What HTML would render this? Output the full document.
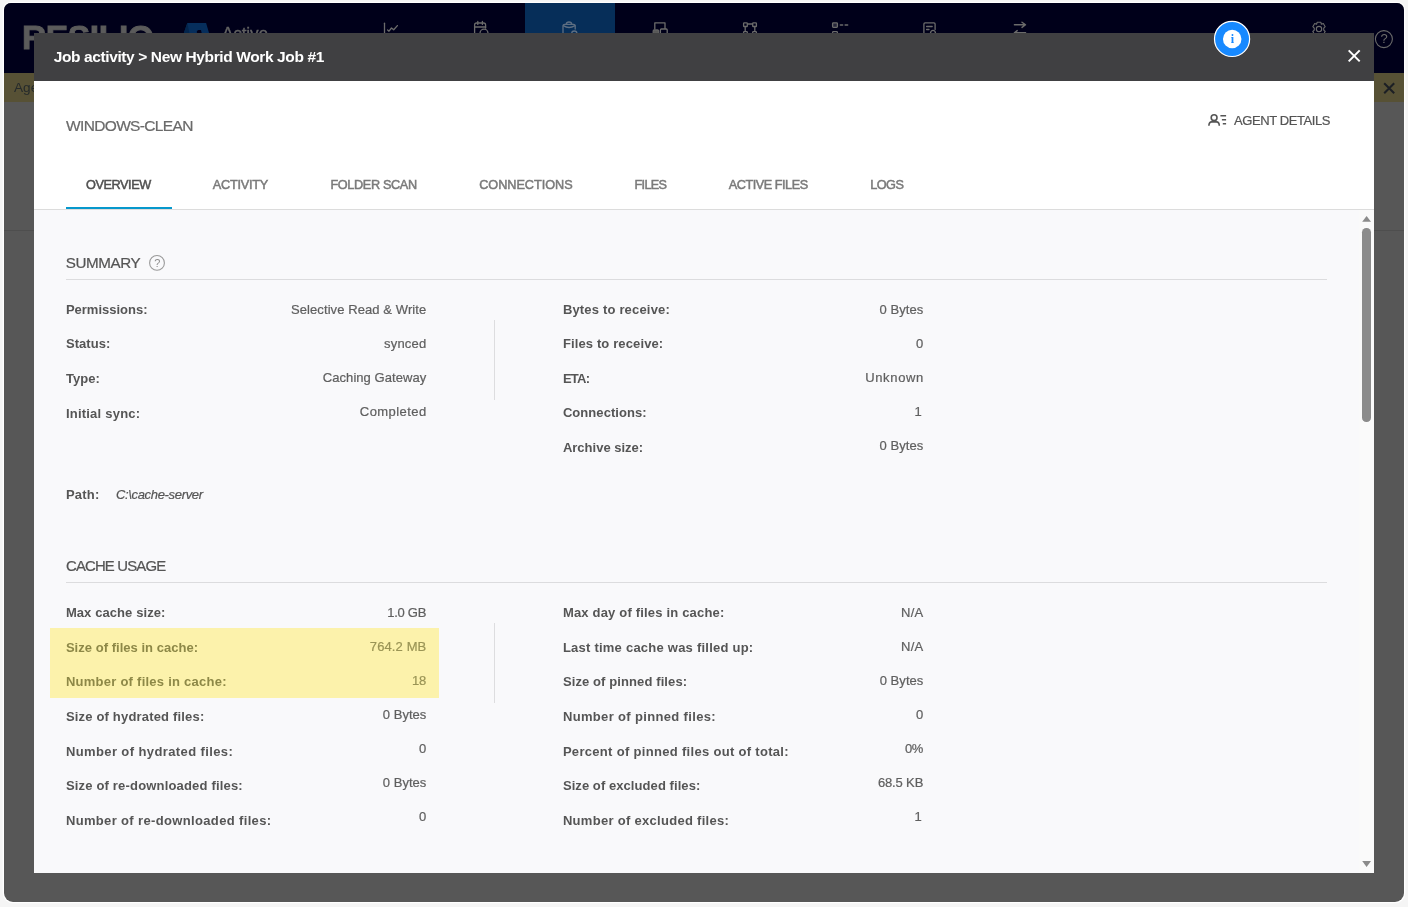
<!DOCTYPE html>
<html lang="en">
<head>
<meta charset="utf-8">
<title>Job activity &gt; New Hybrid Work Job #1</title>
<style>
html,body{margin:0;padding:0}
body{width:1408px;height:907px;overflow:hidden;position:relative;background:#f5f5f5;font-family:"Liberation Sans",Arial,sans-serif;font-size:13px;color:#555;-webkit-font-smoothing:antialiased}
.t{position:absolute;white-space:pre;line-height:20px;z-index:5}
/* screenshot frame */
.frame{position:absolute;left:4px;top:3px;width:1400px;height:899px;border-radius:7px 7px 9px 9px;overflow:hidden;background:#575757;box-shadow:0 0 0 1.3px #fff}
/* dimmed application behind the modal (coordinates relative to frame) */
.nav{position:absolute;left:0;top:0;width:1400px;height:70px;background:#00001a}
.nav .on{position:absolute;left:521px;top:0;width:90px;height:70px;background:#062e59}
.banner{position:absolute;left:0;top:70px;width:1400px;height:29px;background:#575135}
.pageline{position:absolute;left:0;top:227px;width:1400px;height:1px;background:#4e4e4e}
.logo{position:absolute;left:18.4px;top:17.2px;font-size:33.6px;line-height:36px;font-weight:700;color:#5b5b5b;letter-spacing:-0.4px;white-space:pre;-webkit-text-stroke:0.9px #5b5b5b}
.active{position:absolute;left:218px;top:18px;font-size:17.3px;line-height:24px;color:#626262;white-space:pre;letter-spacing:-0.2px;-webkit-text-stroke:0.35px #626262}
.age{position:absolute;left:10px;top:5px;font-size:13.6px;line-height:20px;color:#252a2b;white-space:pre}
svg{position:absolute;overflow:visible}
/* modal */
.modal{position:absolute;left:34px;top:33px;width:1340px;height:840px;background:#f9f9fb;z-index:2}
.mhead{position:absolute;left:0;top:0;width:1340px;height:47.5px;background:#404042}
.mtop{position:absolute;left:0;top:47.5px;width:1340px;height:128.5px;background:#fff;border-bottom:1px solid #dcdcdc}
.tabline{position:absolute;left:32px;top:174px;width:106px;height:2px;background:#0698cc}
.hr{position:absolute;left:32px;width:1261px;height:1px;background:#dcdcde}
.vr{position:absolute;left:460px;width:1px;background:#dddddf}
.hl{position:absolute;left:15.5px;top:595.3px;width:389.7px;height:70px;background:#fcf2ab}
.sbtrack{position:absolute;left:1325px;top:177px;width:15px;height:663px;background:#fafafa}
.sbthumb{position:absolute;left:1328.3px;top:194.5px;width:8.6px;height:194.5px;border-radius:4.3px;background:#8b8b8b}
.info{left:0;top:0;z-index:6}
.txt{position:absolute;left:0;top:0;width:1408px;height:907px;z-index:5;will-change:transform}
.g{will-change:transform}
.navsvg{left:-4px;top:-3px}
.modsvg{left:-34px;top:-33px}
.helpq{position:absolute;left:1374.9px;top:26.3px;width:10px;text-align:center;font-size:13px;line-height:20px;color:#6b6b6b}

</style>
</head>
<body>
<div class="frame">
  <div class="nav">
    <div class="on"></div>
    <div class="logo g">RESILIO</div>
    <div class="active g">Active</div>
  </div>
  <div class="banner"><span class="age g">Agents</span></div>
  <div class="pageline"></div>
  <!-- dimmed navigation icons; svg user units = page pixels -->
  <svg class="navsvg" width="1408" height="110" viewBox="0 0 1408 110" fill="none" stroke="#6b6b6b" stroke-width="1.3" stroke-linecap="round" stroke-linejoin="round">
    <!-- product mark -->
    <path d="M187.3 23 L206.1 23 L209.6 35 L183.2 35 Z" fill="#062e5c" stroke="none"/>
    <path d="M187.3 23 L189.8 35 L183.2 35 Z" fill="#03244b" stroke="none"/>
    <path d="M196.9 35 V31 L198.4 30 H201 L202.1 35 Z" fill="#00001a" stroke="none"/>
    <!-- chart -->
    <path d="M384.5 23.2 V40"/>
    <path d="M387.6 30 L389 31.2 L391.5 28 L393.7 29.8 L397.4 25.6"/>
    <!-- calendar + clock -->
    <path d="M474.6 40 V25 Q474.6 23 476.6 23 H483.6 Q485.6 23 485.6 25 V28"/>
    <path d="M474.6 27 H485.6 M477.8 21.4 V24.4 M482.4 21.4 V24.4"/>
    <circle cx="484" cy="33.2" r="4"/>
    <!-- jobs (active) -->
    <g stroke="#5d6e82">
      <path d="M563 40 V26 Q563 24.3 564.7 24.3 H573.5 Q575.2 24.3 575.2 26 V29"/>
      <path d="M566.2 24.2 Q566.4 22 569 22 Q571.6 22 571.8 24.2"/>
      <path d="M563.3 25.6 Q569 29.4 575 25.6"/>
      <circle cx="574.3" cy="33.6" r="2.6"/>
    </g>
    <!-- agents / devices -->
    <path d="M654.8 29 V22.8 H665 V28.4"/>
    <path d="M653.2 33.5 V31 Q653.2 30 654.2 30 H657.6 Q658.6 30 658.6 31 V33.5 Z" fill="#585858" stroke="#626262"/>
    <path d="M660.4 36 V30 Q660.4 29 661.4 29 H666.2 Q667.2 29 667.2 30 V36"/>
    <!-- groups -->
    <rect x="743.6" y="22.8" width="3.7" height="3.7" rx=".6"/>
    <rect x="752.7" y="22.8" width="3.7" height="3.7" rx=".6"/>
    <path d="M747.5 24 H752.5 M745.2 26.8 V31.4 M754.8 26.8 V31.4"/>
    <rect x="743.6" y="31.7" width="3.7" height="3.7" rx=".6"/>
    <rect x="752.7" y="31.7" width="3.7" height="3.7" rx=".6"/>
    <!-- profiles / list -->
    <rect x="832.6" y="22.8" width="4.8" height="4.6" rx=".8" fill="#26263a"/>
    <path d="M840.4 25 H842.6 M845.2 25 H847.6" stroke-width="1.6"/>
    <rect x="832.6" y="31.6" width="4.8" height="4.6" rx=".8"/>
    <!-- scripts -->
    <path d="M923.9 40 V24 Q923.9 22.9 925 22.9 H934 Q935.1 22.9 935.1 24 V29.6"/>
    <path d="M926.6 26.5 H932.2 M926.6 29.5 H929"/>
    <path d="M930.4 33.4 Q930.8 30.4 933 30.4 Q935.2 30.4 935.6 33.4"/>
    <!-- transfers -->
    <path d="M1014.4 24.8 H1025.4 M1022 22.2 L1025.5 24.8 L1022 27.4" stroke-width="1.4"/>
    <path d="M1014.4 32.8 H1025.6 M1017.2 30.6 L1014.4 32.8" stroke-width="1.4"/>
    <!-- settings gear -->
    <path d="M1317.1 22.3 h3.8 l.5 2 l1.9 -.8 l1.9 3.2 l-1.5 1.4 q.2 1 0 2 l1.5 1.4 l-1.9 3.2 l-1.9 -.8 l-.5 2 h-3.8 l-.5 -2 l-1.9 .8 l-1.9 -3.2 l1.5 -1.4 q-.2 -1 0 -2 l-1.5 -1.4 l1.9 -3.2 l1.9 .8 Z" stroke-width="1.1"/>
    <circle cx="1319" cy="29.1" r="2.7" stroke-width="1.1"/>
    <!-- help -->
    <circle cx="1383.9" cy="39.1" r="8.5" stroke-width="1.1"/>
    <!-- banner close -->
    <path d="M1384.2 83.2 L1394.2 93.2 M1394.2 83.2 L1384.2 93.2" stroke="#1c1f24" stroke-width="2" stroke-linecap="butt"/>
  </svg>
  <span class="helpq g">?</span>
</div>
<div class="modal">
  <div class="mhead"></div>
  <div class="mtop"></div>
  <div class="tabline"></div>
  <div class="hr" style="top:246px"></div>
  <div class="hr" style="top:549px"></div>
  <div class="vr" style="top:287px;height:80px"></div>
  <div class="vr" style="top:590px;height:80px"></div>
  <div class="hl"></div>
  <div class="sbtrack"></div>
  <div class="sbthumb"></div>
  <!-- modal icons; svg user units = page pixels -->
  <svg class="modsvg" width="1408" height="907" viewBox="0 0 1408 907" fill="none" stroke-linecap="butt">
    <path d="M1348.7 50.4 L1359.7 61.4 M1359.7 50.4 L1348.7 61.4" stroke="#fff" stroke-width="2"/>
    <g stroke="#555" stroke-width="1.6">
      <circle cx="1214.1" cy="117.7" r="2.9"/>
      <path d="M1208.9 125.8 Q1208.9 121.9 1211.8 121.9 H1216.4 Q1219.3 121.9 1219.3 125.8"/>
      <path d="M1220.4 115.8 H1226.1 M1221.9 119.8 H1226.1 M1222.8 123.8 H1226.1"/>
    </g>
    <circle cx="157" cy="262.9" r="7.4" stroke="#9a9a9a" stroke-width="1.1"/>
    <path d="M1362.2 221.8 L1366.6 216 L1371 221.8 Z" fill="#8b8b8b"/>
    <path d="M1362.2 861 L1366.6 867 L1371 861 Z" fill="#8b8b8b"/>
  </svg>
</div>
<svg class="info" width="1408" height="70" viewBox="0 0 1408 70">
  <circle cx="1232.05" cy="38.95" r="17.55" fill="#1789ff" stroke="#fff" stroke-width="1.2"/>
  <circle cx="1232.2" cy="39.05" r="9.25" fill="#fff"/>
  <text x="1232.5" y="42.8" text-anchor="middle" font-family="'Liberation Serif','DejaVu Serif',serif" font-weight="700" font-size="12.2" fill="#1789ff">i</text>
</svg>
<div class="txt">
<span class="t" style="left:153.2px;top:253.4px;width:8px;text-align:center;font-size:11px;line-height:20px;color:#8e8e8e">?</span>
<span class="t" style="top:47.48px;font-size:15.5px;color:#ffffff;font-weight:700;letter-spacing:-0.384px;left:53.70px">Job activity &gt; New Hybrid Work Job #1</span>
<span class="t" style="top:116.08px;font-size:15.5px;color:#6a6a6a;-webkit-text-stroke:0.22px #6a6a6a;letter-spacing:-0.650px;left:66.00px">WINDOWS-CLEAN</span>
<span class="t" style="top:111.45px;font-size:13px;color:#555;-webkit-text-stroke:0.22px #555;letter-spacing:-0.399px;left:1233.90px">AGENT DETAILS</span>
<span class="t" style="top:175.25px;font-size:12.7px;color:#505050;-webkit-text-stroke:0.5px #505050;letter-spacing:-0.422px;left:86.00px">OVERVIEW</span>
<span class="t" style="top:175.25px;font-size:12.7px;color:#7a7a7a;-webkit-text-stroke:0.5px #7a7a7a;letter-spacing:-0.244px;left:212.80px">ACTIVITY</span>
<span class="t" style="top:175.25px;font-size:12.7px;color:#7a7a7a;-webkit-text-stroke:0.5px #7a7a7a;letter-spacing:-0.355px;left:330.40px">FOLDER SCAN</span>
<span class="t" style="top:175.25px;font-size:12.7px;color:#7a7a7a;-webkit-text-stroke:0.5px #7a7a7a;letter-spacing:-0.035px;left:479.20px">CONNECTIONS</span>
<span class="t" style="top:175.25px;font-size:12.7px;color:#7a7a7a;-webkit-text-stroke:0.5px #7a7a7a;letter-spacing:-0.641px;left:634.40px">FILES</span>
<span class="t" style="top:175.25px;font-size:12.7px;color:#7a7a7a;-webkit-text-stroke:0.5px #7a7a7a;letter-spacing:-0.483px;left:728.80px">ACTIVE FILES</span>
<span class="t" style="top:175.25px;font-size:12.7px;color:#7a7a7a;-webkit-text-stroke:0.5px #7a7a7a;letter-spacing:-0.522px;left:870.20px">LOGS</span>
<span class="t" style="top:253.18px;font-size:15.2px;color:#555;-webkit-text-stroke:0.22px #555;letter-spacing:-0.410px;left:65.70px">SUMMARY</span>
<span class="t" style="top:556.29px;font-size:14.9px;color:#555;-webkit-text-stroke:0.22px #555;letter-spacing:-0.831px;left:66.00px">CACHE USAGE</span>
<span class="t" style="top:299.75px;font-size:13px;color:#555555;font-weight:700;letter-spacing:-0.005px;left:65.90px">Permissions:</span>
<span class="t" style="top:334.42px;font-size:13px;color:#555555;font-weight:700;letter-spacing:0.073px;left:65.90px">Status:</span>
<span class="t" style="top:369.09px;font-size:13px;color:#555555;font-weight:700;letter-spacing:0.070px;left:65.90px">Type:</span>
<span class="t" style="top:403.76px;font-size:13px;color:#555555;font-weight:700;letter-spacing:0.222px;left:65.90px">Initial sync:</span>
<span class="t" style="top:299.65px;font-size:13px;color:#5f5f5f;-webkit-text-stroke:0.22px #5f5f5f;letter-spacing:0.084px;right:981.72px">Selective Read &amp; Write</span>
<span class="t" style="top:333.65px;font-size:13px;color:#5f5f5f;-webkit-text-stroke:0.22px #5f5f5f;letter-spacing:0.199px;right:981.60px">synced</span>
<span class="t" style="top:367.65px;font-size:13px;color:#5f5f5f;-webkit-text-stroke:0.22px #5f5f5f;letter-spacing:0.055px;right:981.74px">Caching Gateway</span>
<span class="t" style="top:401.65px;font-size:13px;color:#5f5f5f;-webkit-text-stroke:0.22px #5f5f5f;letter-spacing:0.441px;right:981.36px">Completed</span>
<span class="t" style="top:299.75px;font-size:13px;color:#555555;font-weight:700;letter-spacing:0.177px;left:562.90px">Bytes to receive:</span>
<span class="t" style="top:334.30px;font-size:13px;color:#555555;font-weight:700;letter-spacing:0.126px;left:562.90px">Files to receive:</span>
<span class="t" style="top:368.85px;font-size:13px;color:#555555;font-weight:700;letter-spacing:-0.725px;left:562.90px">ETA:</span>
<span class="t" style="top:403.40px;font-size:13px;color:#555555;font-weight:700;letter-spacing:0.067px;left:562.90px">Connections:</span>
<span class="t" style="top:437.95px;font-size:13px;color:#555555;font-weight:700;letter-spacing:0.008px;left:562.90px">Archive size:</span>
<span class="t" style="top:299.65px;font-size:13px;color:#5f5f5f;-webkit-text-stroke:0.22px #5f5f5f;letter-spacing:0.057px;right:484.64px">0 Bytes</span>
<span class="t" style="top:333.65px;font-size:13px;color:#5f5f5f;-webkit-text-stroke:0.22px #5f5f5f;right:484.70px">0</span>
<span class="t" style="top:367.65px;font-size:13px;color:#5f5f5f;-webkit-text-stroke:0.22px #5f5f5f;letter-spacing:0.649px;right:484.05px">Unknown</span>
<span class="t" style="top:401.65px;font-size:13px;color:#5f5f5f;-webkit-text-stroke:0.22px #5f5f5f;right:486.30px">1</span>
<span class="t" style="top:435.65px;font-size:13px;color:#5f5f5f;-webkit-text-stroke:0.22px #5f5f5f;letter-spacing:0.057px;right:484.64px">0 Bytes</span>
<span class="t" style="top:484.65px;font-size:13px;color:#555555;font-weight:700;letter-spacing:0.250px;left:65.90px">Path:</span>
<span class="t" style="top:484.65px;font-size:13px;color:#555;-webkit-text-stroke:0.22px #555;font-style:italic;letter-spacing:-0.325px;left:115.90px">C:\cache-server</span>
<span class="t" style="top:603.05px;font-size:13px;color:#555555;font-weight:700;letter-spacing:0.087px;left:65.90px">Max cache size:</span>
<span class="t" style="top:637.70px;font-size:13px;color:#8d8847;font-weight:700;letter-spacing:0.032px;left:65.90px">Size of files in cache:</span>
<span class="t" style="top:672.35px;font-size:13px;color:#8d8847;font-weight:700;letter-spacing:0.254px;left:65.90px">Number of files in cache:</span>
<span class="t" style="top:707.00px;font-size:13px;color:#555555;font-weight:700;letter-spacing:0.183px;left:65.90px">Size of hydrated files:</span>
<span class="t" style="top:741.65px;font-size:13px;color:#555555;font-weight:700;letter-spacing:0.393px;left:65.90px">Number of hydrated files:</span>
<span class="t" style="top:776.30px;font-size:13px;color:#555555;font-weight:700;letter-spacing:0.181px;left:65.90px">Size of re-downloaded files:</span>
<span class="t" style="top:810.95px;font-size:13px;color:#555555;font-weight:700;letter-spacing:0.351px;left:65.90px">Number of re-downloaded files:</span>
<span class="t" style="top:603.15px;font-size:13px;color:#5f5f5f;-webkit-text-stroke:0.22px #5f5f5f;letter-spacing:-0.294px;right:981.99px">1.0 GB</span>
<span class="t" style="top:637.15px;font-size:13px;color:#9a9455;-webkit-text-stroke:0.22px #9a9455;letter-spacing:0.121px;right:981.58px">764.2 MB</span>
<span class="t" style="top:671.15px;font-size:13px;color:#9a9455;-webkit-text-stroke:0.22px #9a9455;letter-spacing:-0.069px;right:981.77px">18</span>
<span class="t" style="top:705.15px;font-size:13px;color:#5f5f5f;-webkit-text-stroke:0.22px #5f5f5f;letter-spacing:0.023px;right:981.68px">0 Bytes</span>
<span class="t" style="top:739.15px;font-size:13px;color:#5f5f5f;-webkit-text-stroke:0.22px #5f5f5f;right:981.70px">0</span>
<span class="t" style="top:773.15px;font-size:13px;color:#5f5f5f;-webkit-text-stroke:0.22px #5f5f5f;letter-spacing:0.023px;right:981.68px">0 Bytes</span>
<span class="t" style="top:807.15px;font-size:13px;color:#5f5f5f;-webkit-text-stroke:0.22px #5f5f5f;right:981.70px">0</span>
<span class="t" style="top:603.05px;font-size:13px;color:#555555;font-weight:700;letter-spacing:0.185px;left:562.90px">Max day of files in cache:</span>
<span class="t" style="top:637.70px;font-size:13px;color:#555555;font-weight:700;letter-spacing:0.234px;left:562.90px">Last time cache was filled up:</span>
<span class="t" style="top:672.35px;font-size:13px;color:#555555;font-weight:700;letter-spacing:0.106px;left:562.90px">Size of pinned files:</span>
<span class="t" style="top:707.00px;font-size:13px;color:#555555;font-weight:700;letter-spacing:0.347px;left:562.90px">Number of pinned files:</span>
<span class="t" style="top:741.65px;font-size:13px;color:#555555;font-weight:700;letter-spacing:0.311px;left:562.90px">Percent of pinned files out of total:</span>
<span class="t" style="top:776.30px;font-size:13px;color:#555555;font-weight:700;letter-spacing:0.071px;left:562.90px">Size of excluded files:</span>
<span class="t" style="top:810.95px;font-size:13px;color:#555555;font-weight:700;letter-spacing:0.295px;left:562.90px">Number of excluded files:</span>
<span class="t" style="top:603.15px;font-size:13px;color:#5f5f5f;-webkit-text-stroke:0.22px #5f5f5f;letter-spacing:0.264px;right:484.44px">N/A</span>
<span class="t" style="top:637.15px;font-size:13px;color:#5f5f5f;-webkit-text-stroke:0.22px #5f5f5f;letter-spacing:0.264px;right:484.44px">N/A</span>
<span class="t" style="top:671.15px;font-size:13px;color:#5f5f5f;-webkit-text-stroke:0.22px #5f5f5f;letter-spacing:0.040px;right:484.66px">0 Bytes</span>
<span class="t" style="top:705.15px;font-size:13px;color:#5f5f5f;-webkit-text-stroke:0.22px #5f5f5f;right:484.70px">0</span>
<span class="t" style="top:739.15px;font-size:13px;color:#5f5f5f;-webkit-text-stroke:0.22px #5f5f5f;letter-spacing:-0.397px;right:485.10px">0%</span>
<span class="t" style="top:773.15px;font-size:13px;color:#5f5f5f;-webkit-text-stroke:0.22px #5f5f5f;letter-spacing:-0.144px;right:484.84px">68.5 KB</span>
<span class="t" style="top:807.15px;font-size:13px;color:#5f5f5f;-webkit-text-stroke:0.22px #5f5f5f;right:486.20px">1</span>
</div>

</body>
</html>
